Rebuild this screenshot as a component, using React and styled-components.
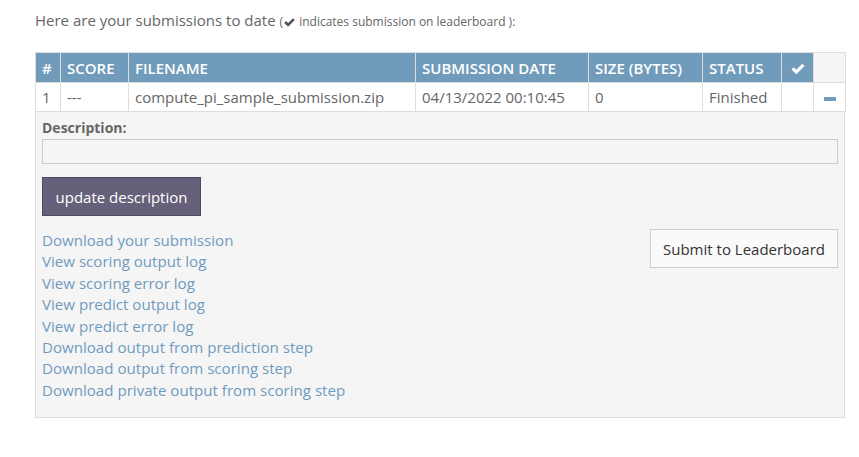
import React from 'react';
import styled, { createGlobalStyle } from 'styled-components';

const GlobalStyle = createGlobalStyle`
  body {
    margin: 0;
    background: #ffffff;
    font-family: 'Open Sans', 'Noto Sans', sans-serif;
    color: #666;
  }
`

const Page = styled.div`
  padding: 9px 15px 0 35px;
  width: 810px;
`

const Intro = styled.p`
  margin: 0 0 19px 0;
  font-size: 15px;
  line-height: 22px;
  color: #666;
`

const Small = styled.span`
  font-size: 12px;
  color: #666;
`

const Table = styled.table`
  width: 810px;
  border-collapse: collapse;
  table-layout: fixed;
  font-size: 15px;
`

const Th = styled.th`
  background: ${p => (p.$blank ? '#f5f5f5' : '#709bba')};
  color: #fff;
  font-weight: 600;
  text-align: ${p => (p.$center ? 'center' : 'left')};
  padding: 0 6px;
  height: 29px;
  border: 1px solid #ddd;
  white-space: nowrap;
`

const Td = styled.td`
  padding: 0 6px;
  height: 28px;
  border: 1px solid #ddd;
  color: #666;
  text-align: ${p => (p.$center ? 'center' : 'left')};
  white-space: nowrap;
`

const Minus = styled.span`
  display: inline-block;
  width: 12px;
  height: 4px;
  background: #709bba;
  vertical-align: middle;
`

const Details = styled.div`
  background: #f5f5f5;
  border: 1px solid #ddd;
  border-top: none;
  padding: 6px 6px 16px 6px;
`

const Label = styled.div`
  font-size: 14px;
  font-weight: 700;
  color: #666;
  line-height: 20px;
`

const DescInput = styled.input`
  display: block;
  box-sizing: border-box;
  width: 100%;
  height: 25px;
  margin-top: 1px;
  border: 1px solid #ccc;
  background: #f5f5f5;
`

const UpdateButton = styled.button`
  margin-top: 13px;
  width: 159px;
  height: 39px;
  background: #67607a;
  border: 1px solid #4f4a60;
  color: #fff;
  font-family: 'Open Sans', sans-serif;
  font-size: 15px;
  padding: 0;
`

const Bottom = styled.div`
  display: flex;
  justify-content: space-between;
  align-items: flex-start;
  margin-top: 14px;
`

const Links = styled.div`
  display: flex;
  flex-direction: column;
`

const Link = styled.a`
  color: #6f9bc0;
  font-size: 15.1px;
  line-height: 21.4px;
  text-decoration: none;
`

const SubmitButton = styled.button`
  width: 188px;
  height: 39px;
  margin-top: -1px;
  background: #fafafa;
  border: 1px solid #ccc;
  color: #333;
  font-family: 'Open Sans', sans-serif;
  font-size: 15px;
  padding: 0;
`

const Check = ({ size = 14, color = '#fff' }) => (
  <svg width={size} height={size} viewBox="0 0 16 16" style={{ verticalAlign: 'middle' }}>
    <path d="M1.5 8.5 L3.8 6.2 L6.3 8.7 L12.3 2.7 L14.6 5 L6.3 13.3 Z" fill={color} />
  </svg>
)

const links = [
  'Download your submission',
  'View scoring output log',
  'View scoring error log',
  'View predict output log',
  'View predict error log',
  'Download output from prediction step',
  'Download output from scoring step',
  'Download private output from scoring step',
]

export default function App() {
  return (
    <Page>
      <GlobalStyle />
      <Intro>
        Here are your submissions to date <Small>(<Check size={13} color="#555" /> indicates submission on leaderboard ):</Small>
      </Intro>
      <Table>
        <colgroup>
          <col style={{ width: 25 }} />
          <col style={{ width: 68 }} />
          <col style={{ width: 287 }} />
          <col style={{ width: 173 }} />
          <col style={{ width: 114 }} />
          <col style={{ width: 79 }} />
          <col style={{ width: 32 }} />
          <col style={{ width: 32 }} />
        </colgroup>
        <thead>
          <tr>
            <Th>#</Th>
            <Th>SCORE</Th>
            <Th>FILENAME</Th>
            <Th>SUBMISSION DATE</Th>
            <Th>SIZE (BYTES)</Th>
            <Th>STATUS</Th>
            <Th $center><Check size={16} /></Th>
            <Th $blank></Th>
          </tr>
        </thead>
        <tbody>
          <tr>
            <Td>1</Td>
            <Td>---</Td>
            <Td>compute_pi_sample_submission.zip</Td>
            <Td>04/13/2022 00:10:45</Td>
            <Td>0</Td>
            <Td>Finished</Td>
            <Td></Td>
            <Td $center><Minus /></Td>
          </tr>
        </tbody>
      </Table>
      <Details>
        <Label>Description:</Label>
        <DescInput type="text" />
        <UpdateButton>update description</UpdateButton>
        <Bottom>
          <Links>
            {links.map(l => (
              <Link key={l} href="#">{l}</Link>
            ))}
          </Links>
          <SubmitButton>Submit to Leaderboard</SubmitButton>
        </Bottom>
      </Details>
    </Page>
  );
}
